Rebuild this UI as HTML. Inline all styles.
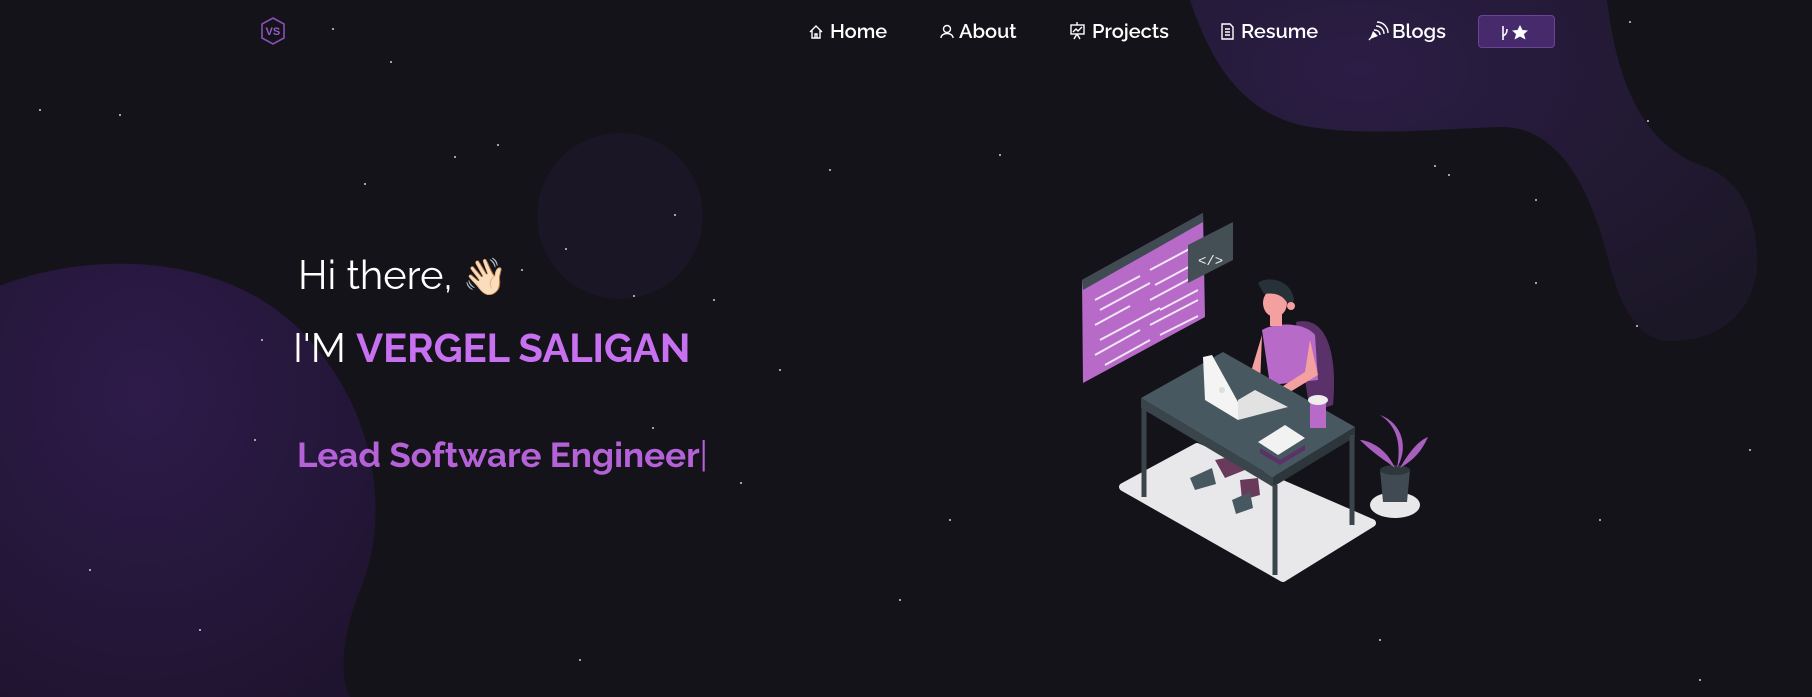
<!DOCTYPE html>
<html><head><meta charset="utf-8"><style>
html,body{margin:0;padding:0;width:1812px;height:697px;overflow:hidden;background:#141319;font-family:"Raleway","Liberation Sans",sans-serif}
.nav a{position:absolute;top:19px;color:#fff;font-size:20px;font-weight:600;text-decoration:none;display:flex;align-items:center;gap:4px}
.btn{position:absolute;left:1478px;top:15px;width:77px;height:33px;background:#472a6b;border:1px solid #6a4597;border-radius:4px;box-sizing:border-box}
.t{position:absolute;white-space:nowrap}
</style></head><body>
<svg width="1812" height="697" style="position:absolute;left:0;top:0">
<defs>
<radialGradient id="g1" cx="0.3" cy="0.2" r="0.9"><stop offset="0" stop-color="#2b1d45"/><stop offset="1" stop-color="#1c1727"/></radialGradient>
<radialGradient id="g2" cx="0.4" cy="0.3" r="0.8"><stop offset="0" stop-color="#2e1b4a"/><stop offset="1" stop-color="#1f1430"/></radialGradient>
</defs>
<path d="M1190,0 C1210,60 1240,110 1300,125 C1360,138 1450,128 1503,127 C1560,128 1590,190 1607,254 C1620,310 1640,341 1670,341 C1730,341 1760,300 1757,254 C1755,200 1730,175 1700,165 C1660,150 1620,110 1607,0 Z" fill="url(#g1)"/>
<circle cx="620" cy="216" r="83" fill="#1b1626"/>
<path d="M-10,290 C80,250 220,250 300,330 C380,410 390,520 360,590 C340,640 340,680 350,697 L-10,697 Z" fill="url(#g2)"/>
<g fill="#cfcfd6">
<circle cx="333" cy="29" r="1"/><circle cx="391" cy="62" r="1"/><circle cx="498" cy="145" r="1"/><circle cx="455" cy="157" r="1"/><circle cx="365" cy="184" r="1"/><circle cx="675" cy="215" r="1"/><circle cx="566" cy="249" r="1"/><circle cx="522" cy="270" r="1"/><circle cx="634" cy="296" r="1"/><circle cx="714" cy="300" r="1"/><circle cx="741" cy="483" r="1"/><circle cx="653" cy="428" r="1"/><circle cx="255" cy="440" r="1"/><circle cx="262" cy="340" r="1"/><circle cx="120" cy="115" r="1"/><circle cx="40" cy="110" r="1"/><circle cx="830" cy="170" r="1"/><circle cx="1000" cy="155" r="1"/><circle cx="1435" cy="166" r="1"/><circle cx="1449" cy="175" r="1"/><circle cx="1536" cy="200" r="1"/><circle cx="1630" cy="22" r="1"/><circle cx="1648" cy="121" r="1"/><circle cx="1637" cy="326" r="1"/><circle cx="1536" cy="283" r="1"/><circle cx="1335" cy="426" r="1"/><circle cx="1600" cy="520" r="1"/><circle cx="1380" cy="640" r="1"/><circle cx="900" cy="600" r="1"/><circle cx="580" cy="660" r="1"/><circle cx="90" cy="570" r="1"/><circle cx="200" cy="630" r="1"/><circle cx="1700" cy="680" r="1"/><circle cx="1750" cy="450" r="1"/><circle cx="780" cy="370" r="1"/><circle cx="950" cy="520" r="1"/>
</g>
<!-- illustration -->
<path d="M1123,487 L1197,447 L1372,523 L1283,578 Z" fill="#e8e8ea" stroke="#e8e8ea" stroke-width="8" stroke-linejoin="round"/>
<ellipse cx="1395" cy="505" rx="25" ry="13" fill="#e8e8ea"/>
<path d="M1082,280 L1203,213 L1205,317 L1083,383 Z" fill="#b76ac8"/>
<path d="M1082,280 L1203,213 L1203,222 L1083,290 Z" fill="#3f4a52"/>
<g stroke="#f3e6f7" stroke-width="2">
<path d="M1095,300 L1140,276 M1100,310 L1150,283 M1095,325 L1130,306 M1100,340 L1160,308 M1095,355 L1140,330 M1105,365 L1150,340 M1150,270 L1195,246 M1155,285 L1198,262 M1150,300 L1195,276 M1160,310 L1198,290 M1150,325 L1198,300 M1160,335 L1198,316"/>
</g>
<path d="M1188,245 L1233,222 L1233,260 L1188,283 Z" fill="#434f55"/>
<text x="1198" y="265" fill="#eee" font-size="14" font-family="Liberation Mono">&lt;/&gt;</text>
<!-- chair -->
<path d="M1296,322 C1325,315 1338,350 1333,405 L1310,412 Z" fill="#5a3168"/>
<!-- legs under desk -->
<path d="M1215,460 L1240,455 L1245,470 L1225,478 Z M1240,480 L1258,478 L1260,495 L1242,500 Z" fill="#6a3a5a"/>
<path d="M1190,478 L1212,468 L1216,484 L1195,490 Z M1232,500 L1250,492 L1253,508 L1236,514 Z" fill="#485860"/>
<!-- torso -->
<path d="M1262,330 C1275,322 1305,322 1315,335 L1318,380 L1270,385 Z" fill="#b76ac8"/>
<path d="M1262,335 L1250,375 L1220,385 L1225,392 L1260,385 Z" fill="#f5a0a0"/>
<path d="M1310,340 L1318,375 L1285,395 L1280,388 L1305,372 Z" fill="#f5a0a0"/>
<rect x="1270" y="310" width="12" height="16" fill="#f5a0a0"/>
<ellipse cx="1275" cy="303" rx="12" ry="14" fill="#f5a0a0"/>
<path d="M1258,283 C1268,275 1292,280 1294,300 L1289,308 C1286,296 1276,292 1264,294 Z" fill="#263238"/>
<circle cx="1291" cy="306" r="4" fill="#f5a0a0"/>
<!-- desk -->
<path d="M1141,398 L1223,352 L1355,427 L1273,477 Z" fill="#485860"/>
<path d="M1141,398 L1273,477 L1273,487 L1141,408 Z" fill="#39454b"/>
<path d="M1273,477 L1355,427 L1355,437 L1273,487 Z" fill="#2d363b"/>
<g stroke="#39454b" stroke-width="5"><path d="M1144,405 L1144,497 M1275,485 L1275,575 M1352,435 L1352,525"/></g>
<!-- laptop -->
<path d="M1203,357 L1212,355 L1238,402 L1238,420 L1205,400 Z" fill="#f4f4f4"/>
<path d="M1238,420 L1288,407 L1255,390 L1238,400 Z" fill="#e2e2e2"/>
<circle cx="1222" cy="390" r="3" fill="#ddd"/>
<rect x="1310" y="398" width="16" height="30" fill="#b76ac8"/><ellipse cx="1318" cy="400" rx="10" ry="5" fill="#eee"/>
<path d="M1258,442 L1285,425 L1305,438 L1278,455 Z" fill="#f2f2f2"/>
<path d="M1260,448 L1280,460 L1305,445 L1305,450 L1280,465 L1260,453 Z" fill="#5a3168"/>
<!-- plant -->
<path d="M1380,470 L1410,470 L1407,502 L1383,502 Z" fill="#3f4a52"/>
<ellipse cx="1395" cy="470" rx="15" ry="5" fill="#2d363b"/>
<path d="M1395,468 C1385,445 1365,440 1360,440 C1375,455 1385,460 1395,468 Z M1397,468 C1402,440 1395,425 1380,415 C1400,422 1410,445 1397,468 Z M1400,468 C1410,450 1420,440 1428,437 C1420,455 1410,462 1400,468 Z" fill="#a95fbd"/>
<!-- logo -->
<path d="M273,18 L284,24 L284,38 L273,44 L262,38 L262,24 Z" fill="none" stroke="#8a4fb8" stroke-width="1.6"/>
<text x="265.5" y="35" fill="#9a5ccb" font-size="11" font-weight="bold" font-family="Liberation Sans">VS</text>
<!-- nav icons -->
<g fill="none" stroke="#fff" stroke-width="1.4">
<path d="M810,32 L816,26 L822,32 M812,30 L812,38 L820,38 L820,30 M815,38 L815,34 L817,34 L817,38"/>
<circle cx="947" cy="29" r="3.5"/><path d="M941,38 C941,32 953,32 953,38"/>
<rect x="1071" y="25" width="13" height="9"/><path d="M1077,22 L1077,25 M1077,34 L1074,39 M1077,34 L1080,39 M1073,32 L1076,29 L1078,31 L1082,27"/>
<path d="M1222,24 L1230,24 L1233,27 L1233,39 L1222,39 Z M1225,29 L1230,29 M1225,32 L1230,32 M1225,35 L1230,35"/>
<path d="M1369,40 L1375,33 M1374,30 C1378,30 1380,32 1380,35 M1376,26 C1381,26 1384,30 1384,34 M1377,22 C1384,22 1388,28 1388,33"/>
</g>
<path d="M1370,39 L1373,31 L1378,36 Z" fill="#fff"/>
</svg>
<div class="nav">
<a style="left:830px">Home</a>
<a style="left:959px">About</a>
<a style="left:1092px">Projects</a>
<a style="left:1241px">Resume</a>
<a style="left:1392px">Blogs</a>
</div>
<div class="btn"><svg width="77" height="33" style="position:absolute;left:0;top:0"><path d="M24,10 L24,24 M24,20 C28,18 28,15 28,13" stroke="#fff" stroke-width="1.6" fill="none"/><path d="M41,9 L43.5,14 L49,14.5 L45,18 L46.5,23.5 L41,20.5 L35.5,23.5 L37,18 L33,14.5 L38.5,14 Z" fill="#fff"/></svg></div>
<div class="t" style="left:298px;top:252px;font-size:40px;color:#fff">Hi there, <span style="font-family:'Noto Color Emoji','DejaVu Sans',sans-serif;font-size:36px">👋🏻</span></div>
<div class="t" style="left:293px;top:325px;font-size:40px;color:#fff">I'M <b style="color:#c770f0">VERGEL SALIGAN</b></div>
<div class="t" style="left:297px;top:435px;font-size:35px;color:#b562d8;font-weight:bold">Lead Software Engineer<span style="font-weight:normal">|</span></div>
</body></html>
